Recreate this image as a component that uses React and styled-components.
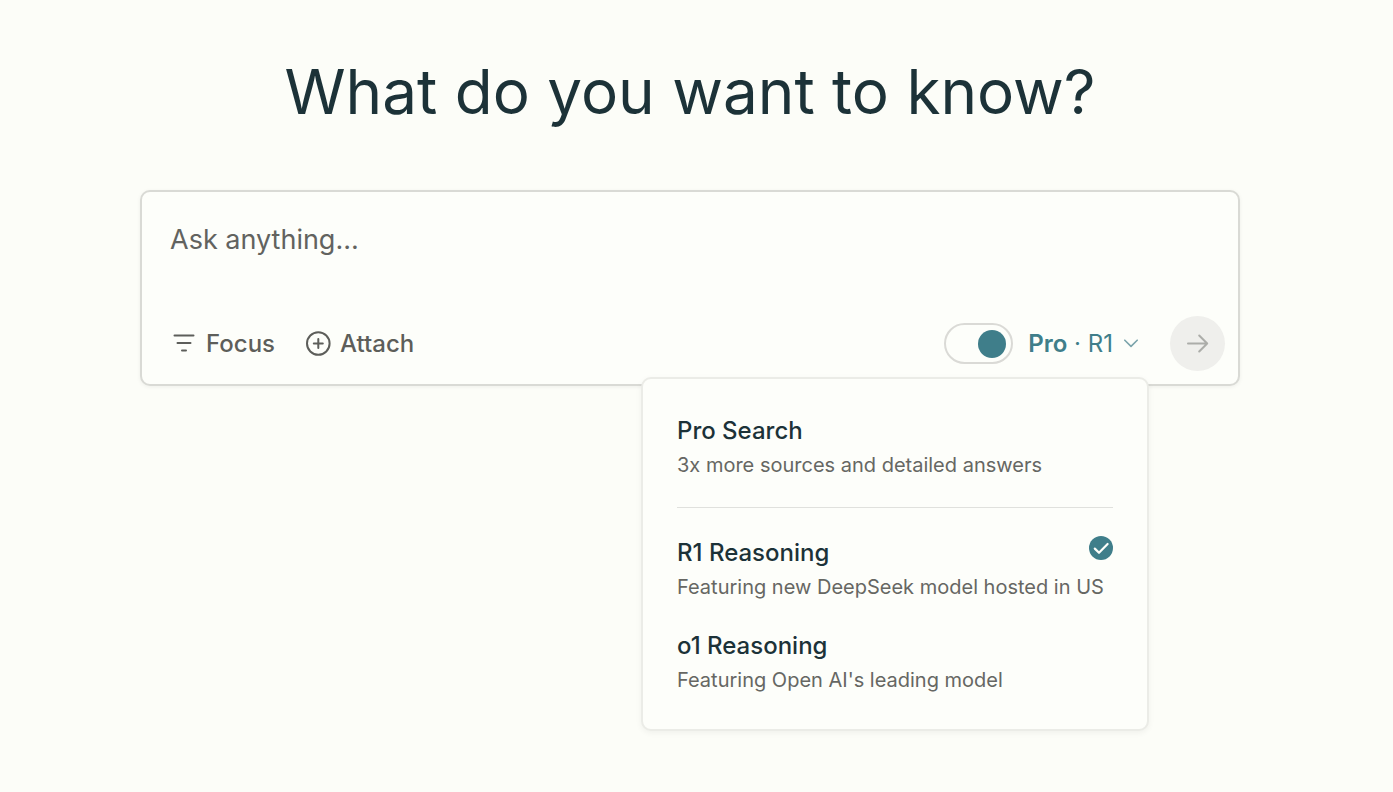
import React, { useState } from 'react';
import styled, { createGlobalStyle } from 'styled-components';

const GlobalStyle = createGlobalStyle`
	* {
		box-sizing: border-box;
	}

	body {
		margin: 0;
		background-color: #fcfdf8;
		color: #1c3238;
		font-family: Inter, 'Liberation Sans', sans-serif;
	}

	button,
	input,
	textarea {
		font-family: inherit;
	}
`;

const StyledPage = styled.main`
	display: flex;
	flex-direction: column;
	gap: 50px;
	min-height: 100vh;
	padding: 44px 153px 56px 140px;
`;

const StyledHeading = styled.h1`
	margin: 0;
	font-size: 62px;
	line-height: 96px;
	font-weight: 400;
	text-align: center;
`;

const StyledCard = styled.form`
	display: flex;
	flex-direction: column;
	padding: 28px 13px 13px 28px;
	border: 2px solid #d9dad5;
	border-radius: 10px;
	background-color: #fdfefa;
	box-shadow: 0 1px 4px rgba(0, 0, 0, 0.06);
`;

const StyledTextarea = styled.textarea`
	display: block;
	width: 100%;
	height: 96px;
	padding: 0;
	border: none;
	outline: none;
	resize: none;
	background: transparent;
	color: #1c3238;
	font-size: 27px;
	line-height: 40px;

	&::placeholder {
		color: #62635f;
		opacity: 1;
	}
`;

const StyledToolbar = styled.div`
	display: flex;
	flex-wrap: wrap;
	align-items: center;
	justify-content: space-between;
`;

const StyledGroup = styled.div`
	display: flex;
	align-items: center;
	gap: ${({ $gap }) => $gap}px;
`;

const StyledToolButton = styled.button`
	display: flex;
	align-items: center;
	gap: 9px;
	padding: 0;
	border: none;
	background: transparent;
	color: #5d5e5a;
	font-size: 24px;
	line-height: 34px;
	font-weight: 500;
	cursor: pointer;
`;

const StyledSwitch = styled.input`
	appearance: none;
	display: flex;
	align-items: center;
	justify-content: ${({ checked }) => (checked ? 'flex-end' : 'flex-start')};
	width: 69px;
	height: 41px;
	margin: 0;
	padding: 0 5px;
	border: 2px solid #dadad6;
	border-radius: 21px;
	background-color: #fdfefa;
	cursor: pointer;

	&::before {
		content: '';
		width: 28px;
		height: 28px;
		border-radius: 50%;
		background-color: ${({ checked }) => (checked ? '#3f7e8a' : '#b5b6b2')};
	}
`;

const StyledPicker = styled.div`
	position: relative;
	margin-right: 16px;
`;

const StyledPickerButton = styled(StyledToolButton)`
	height: 41px;
	gap: 10px;
	color: #3f7e8a;
	font-weight: 400;
`;

const StyledPickerPlan = styled.span`
	font-weight: 600;
`;

const StyledMenu = styled.div`
	position: absolute;
	top: calc(100% + 13px);
	right: -10px;
	z-index: 1;
	display: flex;
	flex-direction: column;
	gap: 25px;
	width: 508px;
	padding: 35px 34px 32px;
	border: 2px solid #ebece7;
	border-radius: 10px;
	background-color: #fdfefa;
	box-shadow: 0 2px 6px rgba(0, 0, 0, 0.05);
`;

const StyledDivider = styled.hr`
	width: 100%;
	height: 1px;
	margin: 0 0 3px;
	border: none;
	background-color: #e0e1dd;
`;

const StyledOption = styled.button`
	display: flex;
	flex-direction: column;
	width: 100%;
	padding: 0;
	border: none;
	background: transparent;
	text-align: left;
	cursor: pointer;
`;

const StyledOptionHead = styled.span`
	display: flex;
	justify-content: space-between;
	align-items: flex-start;
	width: 100%;
	color: #1c3238;
	font-size: 24px;
	line-height: 34px;
	font-weight: 500;
`;

const StyledOptionText = styled.span`
	color: #666763;
	font-size: 20px;
	line-height: 34px;
	white-space: nowrap;
`;

const StyledSubmit = styled.button`
	display: flex;
	align-items: center;
	justify-content: center;
	width: 55px;
	height: 55px;
	padding: 0;
	border: none;
	border-radius: 50%;
	background-color: #efefec;
	color: #acada9;
`;

function FocusIcon() {
	return (
		<svg width='27' height='28' viewBox='0 0 27 28' fill='none' stroke='currentColor' strokeWidth='2' strokeLinecap='round' aria-hidden='true'>
			<path d='M4.5 5.5H23.5M7.5 13H20.5M12 20.5H16' />
		</svg>
	);
}

function AttachIcon() {
	return (
		<svg width='26' height='26' viewBox='0 0 26 26' fill='none' stroke='currentColor' strokeWidth='2' strokeLinecap='round' aria-hidden='true'>
			<circle cx='13.3' cy='12.5' r='11.3' />
			<path d='M13.3 8V17M8.8 12.5H17.8' />
		</svg>
	);
}

function ChevronIcon() {
	return (
		<svg width='16' height='10' viewBox='0 0 16 10' fill='none' stroke='#7ba4ab' strokeWidth='1.6' strokeLinecap='round' strokeLinejoin='round' aria-hidden='true'>
			<path d='M1.8 1.2L8 7.4L14.2 1.2' />
		</svg>
	);
}

function ArrowIcon() {
	return (
		<svg width='24' height='24' viewBox='0 0 24 24' fill='none' stroke='currentColor' strokeWidth='2' strokeLinecap='round' strokeLinejoin='round' aria-hidden='true'>
			<path d='M2 11.5H21.2M13.2 3.5L21.2 11.5L13.2 19.5' />
		</svg>
	);
}

function CheckIcon() {
	return (
		<svg width='24' height='24' viewBox='0 0 24 24' fill='none' aria-hidden='true'>
			<circle cx='12' cy='12' r='12' fill='#3f7e8a' />
			<path d='M5.8 12.6L10 16.8L18.6 8' stroke='#fdfefa' strokeWidth='2.2' strokeLinecap='round' strokeLinejoin='round' />
		</svg>
	);
}

function Option({ title, text, selected, onSelect }) {
	return (
		<StyledOption
			type='button'
			role='menuitemradio'
			aria-checked={selected}
			onClick={onSelect}>
			<StyledOptionHead>
				{title}
				{selected && <CheckIcon />}
			</StyledOptionHead>
			<StyledOptionText>{text}</StyledOptionText>
		</StyledOption>
	);
}

const models = [
	{
		id: 'R1',
		title: 'R1 Reasoning',
		text: 'Featuring new DeepSeek model hosted in US',
	},
	{
		id: 'o1',
		title: 'o1 Reasoning',
		text: "Featuring Open AI's leading model",
	},
];

function App() {
	const [pro, setPro] = useState(true);
	const [open, setOpen] = useState(true);
	const [model, setModel] = useState('R1');

	return (
		<>
			<GlobalStyle />
			<StyledPage>
				<StyledHeading>What do you want to know?</StyledHeading>
				<StyledCard onSubmit={(e) => e.preventDefault()}>
					<StyledTextarea
						aria-label='Ask anything'
						placeholder='Ask anything...'
					/>
					<StyledToolbar>
						<StyledGroup $gap={30}>
							<StyledToolButton type='button'>
								<FocusIcon />
								Focus
							</StyledToolButton>
							<StyledToolButton type='button'>
								<AttachIcon />
								Attach
							</StyledToolButton>
						</StyledGroup>
						<StyledGroup $gap={15}>
							<StyledSwitch
								type='checkbox'
								role='switch'
								aria-label='Pro'
								checked={pro}
								onChange={() => setPro(!pro)}
							/>
							<StyledPicker>
								<StyledPickerButton
									type='button'
									aria-haspopup='menu'
									aria-expanded={open}
									onClick={() => setOpen(!open)}>
									<span>
										<StyledPickerPlan>Pro</StyledPickerPlan> · {model}
									</span>
									<ChevronIcon />
								</StyledPickerButton>
								{open && (
									<StyledMenu role='menu'>
										<Option
											title='Pro Search'
											text='3x more sources and detailed answers'
											selected={model === 'Search'}
											onSelect={() => setModel('Search')}
										/>
										<StyledDivider />
										{models.map(({ id, title, text }) => (
											<Option
												key={id}
												title={title}
												text={text}
												selected={model === id}
												onSelect={() => setModel(id)}
											/>
										))}
									</StyledMenu>
								)}
							</StyledPicker>
							<StyledSubmit type='submit' aria-label='Submit'>
								<ArrowIcon />
							</StyledSubmit>
						</StyledGroup>
					</StyledToolbar>
				</StyledCard>
			</StyledPage>
		</>
	);
}

export default App;
